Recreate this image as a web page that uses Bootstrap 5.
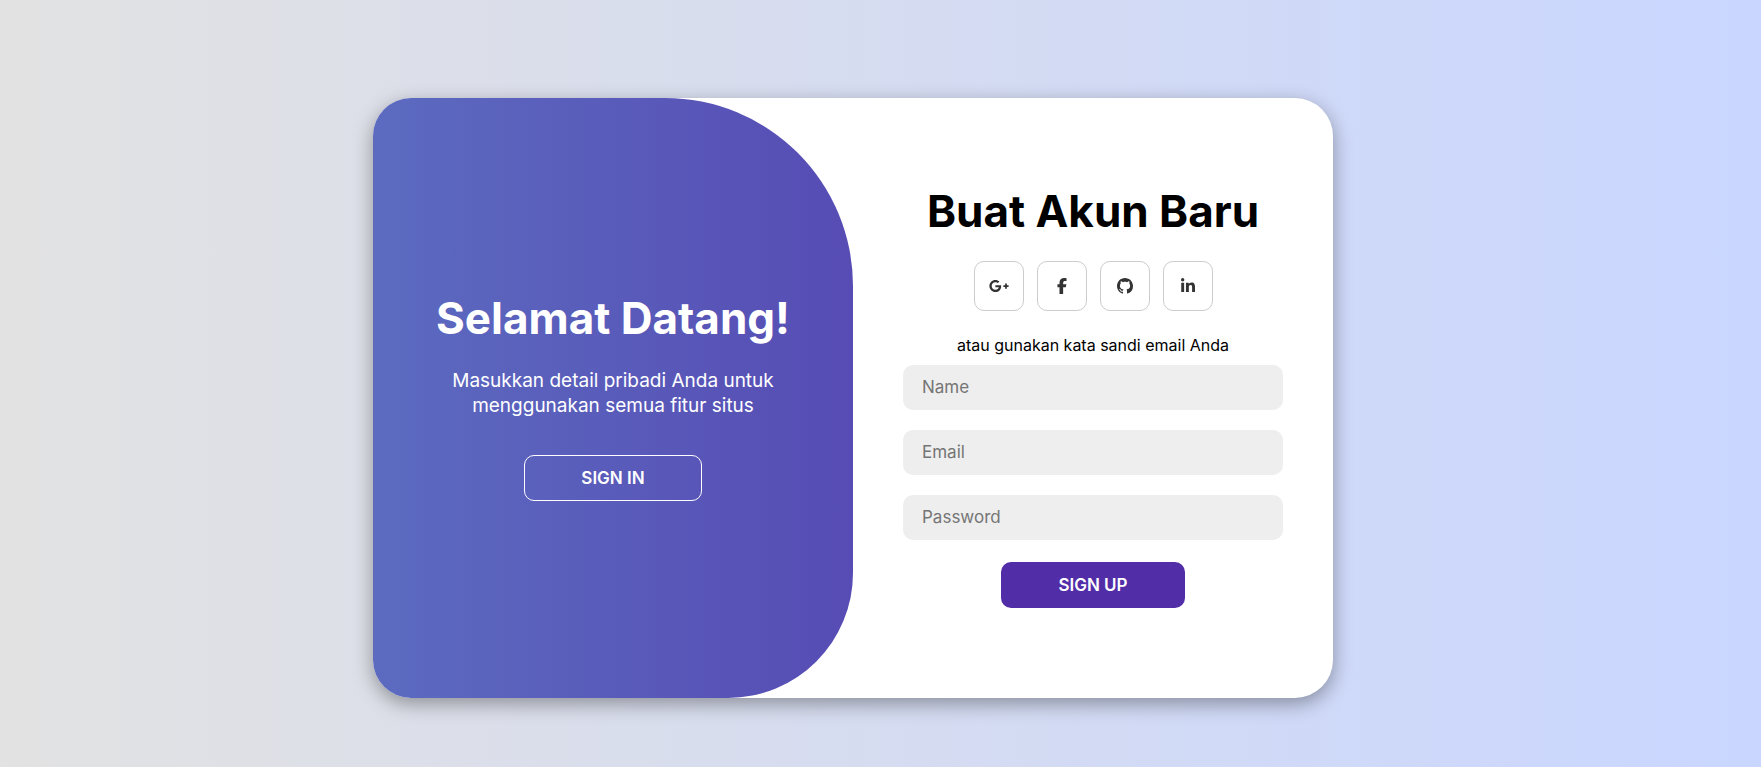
<!DOCTYPE html>
<html lang="id">
<head>
<meta charset="utf-8">
<meta name="viewport" content="width=device-width, initial-scale=1">
<title>Buat Akun Baru</title>
<link href="https://cdn.jsdelivr.net/npm/bootstrap@5.3.0/dist/css/bootstrap.min.css" rel="stylesheet">
<style>
  body {
    font-family: Inter, "Open Sans", sans-serif;
    color: #000;
    background: linear-gradient(to right, #e2e2e2, #c9d6ff);
  }
  .auth-page { padding: 29px 55px 0 0; }
  .auth-card {
    width: 100%;
    max-width: 960px;
    min-height: 600px;
    border-radius: 38px;
    box-shadow: 0 6px 19px rgba(0, 0, 0, .35);
  }
  .welcome-panel {
    padding: 0 38px 2px;
    border-radius: 0 188px 125px 0;
    background: linear-gradient(to right, #5c6bc0, #512da8) 0 0 / 200% 100%;
  }
  .signup-panel { padding: 0 50px 2px; }
  .auth-title { font-size: 44px; line-height: 48px; font-weight: 700; }
  .welcome-text { font-size: 19px; line-height: 25px; margin: 26px 0 37px; }
  .auth-btn {
    font-size: 17px;
    line-height: 20px;
    font-weight: 600;
    color: #fff;
    padding: 12px 56px;
    border: 1px solid transparent;
    border-radius: 10px;
  }
  .auth-btn:hover { color: #fff; border-color: #fff; }
  .btn-in { border-color: #fff; }
  .btn-up { background: #512da8; margin-top: 22px; }
  .social-row { gap: 13px; margin: 26px 0 24px; }
  .social-link {
    width: 50px;
    height: 50px;
    color: #333;
    border: 1px solid #ccc;
    border-radius: 10px;
  }
  .social-link svg { height: 16px; fill: currentColor; }
  .hint { font-size: 16px; line-height: 20px; margin-bottom: 10px; }
  .field-stack { gap: 20px; }
  .auth-field, .auth-field:focus {
    height: 45px;
    font-size: 17px;
    padding: 0 19px;
    border: 0;
    border-radius: 10px;
    background: #eee;
  }
  .auth-field::placeholder { color: #757575; }
</style>
</head>
<body>
<main class="auth-page min-vh-100 d-flex align-items-center justify-content-center">
  <div class="auth-card bg-white overflow-hidden d-flex">
    <div class="row g-0 flex-fill">
      <section class="welcome-panel col-6 text-white text-center d-flex flex-column align-items-center justify-content-center">
        <h1 class="auth-title text-nowrap mb-0">Selamat Datang!</h1>
        <p class="welcome-text">Masukkan detail pribadi Anda untuk menggunakan semua fitur situs</p>
        <button type="button" class="btn auth-btn btn-in">SIGN IN</button>
      </section>
      <form class="signup-panel col-6 d-flex flex-column align-items-center justify-content-center">
        <h2 class="auth-title text-nowrap mb-0">Buat Akun Baru</h2>
        <div class="social-row d-flex">
          <a href="#" class="social-link d-flex align-items-center justify-content-center" aria-label="Google Plus">
            <svg viewBox="0 0 640 512" aria-hidden="true"><path d="M386.061 228.496c1.834 9.692 3.143 19.384 3.143 31.956C389.204 370.205 315.599 448 204.8 448c-106.084 0-192-85.915-192-192s85.916-192 192-192c51.864 0 95.083 18.859 128.611 50.292l-52.126 50.03c-14.145-13.621-39.028-29.599-76.485-29.599-65.484 0-118.92 54.221-118.92 121.277 0 67.056 53.436 121.277 118.92 121.277 75.961 0 104.513-54.745 108.965-82.773H204.8v-66.009h181.261zm185.406 6.437V179.2h-56.001v55.733h-55.733v56.001h55.733v55.733h56.001v-55.733H627.2v-56.001h-55.733z"/></svg>
          </a>
          <a href="#" class="social-link d-flex align-items-center justify-content-center" aria-label="Facebook">
            <svg viewBox="0 0 320 512" aria-hidden="true"><path d="M80 299.3V512H196V299.3h86.500l18-97.800H196V166.900c0-51.700 20.300-71.500 72.700-71.500c16.300 0 29.400 .4 37 1.200V7.900C291.400 4 256.400 0 236.200 0C129.300 0 80 50.500 80 159.400v42.100H14v97.800H80z"/></svg>
          </a>
          <a href="#" class="social-link d-flex align-items-center justify-content-center" aria-label="GitHub">
            <svg viewBox="0 0 16 16" aria-hidden="true"><path d="M8 0C3.58 0 0 3.58 0 8c0 3.54 2.29 6.53 5.47 7.59.4.07.55-.17.55-.38 0-.19-.01-.82-.01-1.49-2.01.37-2.53-.49-2.69-.94-.09-.23-.48-.94-.82-1.13-.28-.15-.68-.52-.01-.53.63-.01 1.08.58 1.23.82.72 1.21 1.87.87 2.33.66.07-.52.28-.87.51-1.07-1.78-.2-3.64-.89-3.64-3.95 0-.87.31-1.59.82-2.15-.08-.2-.36-1.02.08-2.12 0 0 .67-.21 2.2.82.64-.18 1.32-.27 2-.27s1.36.09 2 .27c1.53-1.04 2.2-.82 2.2-.82.44 1.1.16 1.92.08 2.12.51.56.82 1.27.82 2.15 0 3.070-1.870 3.750-3.650 3.950.290.250.540.730.540 1.480 0 1.070-.010 1.930-.010 2.200 0 .210.150.460.550.380A8.010 8.010 0 0 0 16 8c0-4.420-3.580-8-8-8z"/></svg>
          </a>
          <a href="#" class="social-link d-flex align-items-center justify-content-center" aria-label="LinkedIn">
            <svg viewBox="0 0 448 512" aria-hidden="true"><path d="M100.28 448H7.4V148.900h92.880zM53.790 108.100C24.090 108.100 0 83.500 0 53.800a53.790 53.790 0 0 1 107.580 0c0 29.700-24.100 54.300-53.790 54.300zM447.900 448h-92.680V302.400c0-34.700-.7-79.200-48.290-79.200-48.290 0-55.690 37.700-55.690 76.700V448h-92.780V148.900h89.080v40.800h1.300c12.400-23.500 42.690-48.300 87.880-48.300 94 0 111.280 61.900 111.280 142.300V448z"/></svg>
          </a>
        </div>
        <p class="hint">atau gunakan kata sandi email Anda</p>
        <div class="field-stack w-100 d-flex flex-column">
          <input type="text" class="form-control auth-field" placeholder="Name" aria-label="Name">
          <input type="email" class="form-control auth-field" placeholder="Email" aria-label="Email">
          <input type="password" class="form-control auth-field" placeholder="Password" aria-label="Password">
        </div>
        <button type="submit" class="btn auth-btn btn-up">SIGN UP</button>
      </form>
    </div>
  </div>
</main>
<script src="https://cdn.jsdelivr.net/npm/bootstrap@5.3.0/dist/js/bootstrap.bundle.min.js"></script>
</body>
</html>
